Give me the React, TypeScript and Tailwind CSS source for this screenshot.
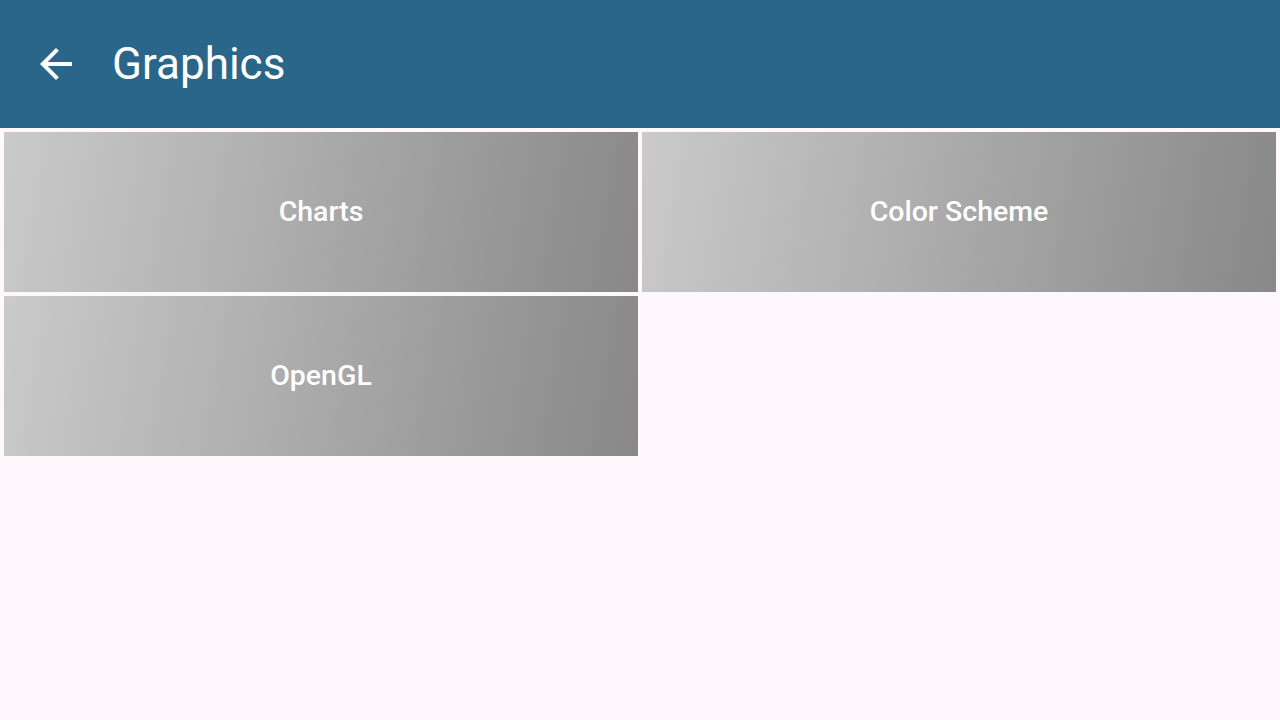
const tiles = ['Charts', 'Color Scheme', 'OpenGL'];

export default function App() {
  return (
    <div className="min-h-screen w-full bg-[#fef7fc]" style={{ fontFamily: 'Roboto, "Noto Sans", sans-serif' }}>
      <header className="h-32 bg-[#296689] flex items-center px-8">
        <svg width="48" height="48" viewBox="0 0 24 24" className="shrink-0">
          <path d="M20 11H7.83l5.59-5.59L12 4l-8 8 8 8 1.41-1.41L7.83 13H20v-2z" fill="#ffffff" />
        </svg>
        <h1 className="ml-8 text-[44px] text-white font-normal leading-none">Graphics</h1>
      </header>
      <div className="grid grid-cols-2 gap-1 p-1">
        {tiles.map((t) => (
          <div
            key={t}
            className="h-40 flex items-center justify-center bg-[linear-gradient(100deg,#cacaca,#888888)]"
          >
            <span className="text-white text-[28.5px] font-medium leading-none">{t}</span>
          </div>
        ))}
      </div>
    </div>
  );
}
